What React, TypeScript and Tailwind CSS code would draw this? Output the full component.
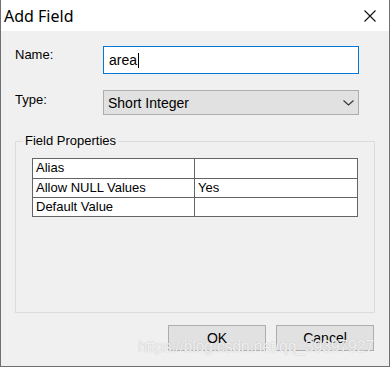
import React from "react";

export default function App() {
  const font = { fontFamily: '"Liberation Sans", Arial, sans-serif' };
  return (
    <div
      className="relative w-[390px] h-[367px] bg-[#f0f0f0] border-l border-r border-b border-[#707070] text-[13px] text-black overflow-hidden"
      style={font}
    >
      {/* Title bar */}
      <div className="h-[31px] bg-white flex items-center justify-between pl-[3px] pr-[13px]">
        <span className="text-[16px] text-black" style={{ fontFamily: '"Noto Sans", "Open Sans", sans-serif' }}>
          Add Field
        </span>
        <svg width="12" height="12" viewBox="0 0 12 12" className="mt-[1px]">
          <path d="M0.5 0.5 L11.5 11.5 M11.5 0.5 L0.5 11.5" stroke="#111" strokeWidth="1.1" fill="none" />
        </svg>
      </div>

      {/* Name row */}
      <div className="flex mt-[15px] pl-[14px]">
        <div className="w-[88px] pt-[1px] leading-[16px]">Name:</div>
        <div className="w-[256px] h-[28px] bg-white border border-[#0078d7] flex items-center pl-[5px] relative">
          <span className="leading-[16px] text-[14px]">area</span>
          <span className="w-px h-[15px] bg-black ml-px" />
        </div>
      </div>

      {/* Type row */}
      <div className="flex mt-[16px] pl-[14px]">
        <div className="w-[88px] pt-[2px] leading-[16px]">Type:</div>
        <div className="w-[256px] h-[25px] bg-[#e1e1e1] border border-[#adadad] flex items-center justify-between pl-[4px] pr-[4px]">
          <span className="text-[14px] leading-[16px]">Short Integer</span>
          <svg width="11" height="6" viewBox="0 0 11 6">
            <path d="M0.5 0.5 L5.5 5 L10.5 0.5" stroke="#333" strokeWidth="1.1" fill="none" />
          </svg>
        </div>
      </div>

      {/* Group box */}
      <div className="relative ml-[14px] mt-[26px] w-[360px] h-[172px] border border-[#dcdcdc] pt-[16px] pl-[16px]">
        <span className="absolute left-[7px] top-[-9px] px-[2px] bg-[#f0f0f0] leading-[16px] text-[13px]">
          Field Properties
        </span>
        <div className="w-[326px] border border-[#646464] bg-white">
          {[
            ["Alias", ""],
            ["Allow NULL Values", "Yes"],
            ["Default Value", ""],
          ].map(([k, v], i) => (
            <div
              key={k}
              className={`flex h-[19px] ${i > 0 ? "border-t border-[#646464]" : ""}`}
            >
              <div className="w-[162px] border-r border-[#646464] pl-[3px] leading-[18px]">{k}</div>
              <div className="flex-1 pl-[3px] leading-[18px]">{v}</div>
            </div>
          ))}
        </div>
      </div>

      {/* Buttons */}
      <div className="flex justify-end gap-[10px] pr-[15px] mt-[12px]">
        <div className="w-[98px] h-[26px] bg-[#e1e1e1] border border-[#adadad] flex items-center justify-center text-[14px]">
          OK
        </div>
        <div className="w-[98px] h-[26px] bg-[#e1e1e1] border border-[#adadad] flex items-center justify-center text-[14px]">
          Cancel
        </div>
      </div>

      {/* Watermark */}
      <div
        className="absolute left-[137px] top-[338px] text-[16px] leading-[18px] text-white/80 pointer-events-none whitespace-nowrap"
        style={{ textShadow: "0 0 1px #aaa", fontFamily: '"Liberation Sans", Arial, sans-serif', letterSpacing: "-0.3px" }}
      >
        https://blog.csdn.net/qq_39397927
      </div>
    </div>
  );
}
